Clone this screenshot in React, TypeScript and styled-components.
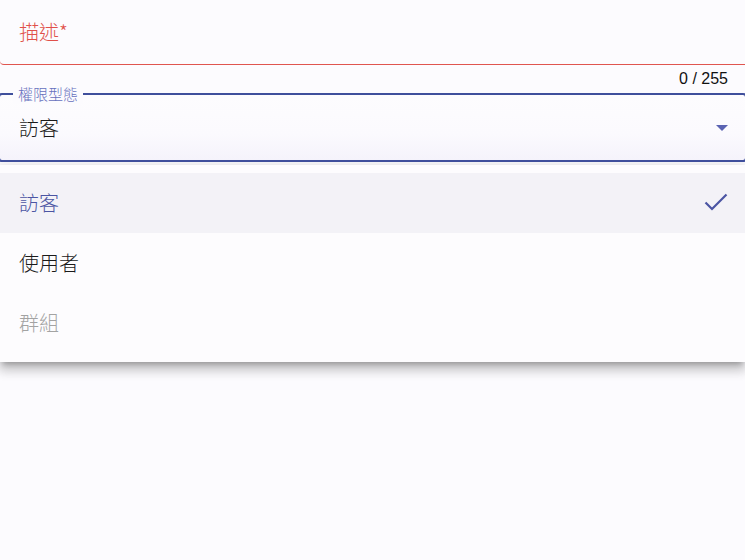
import React from "react";
import styled, { createGlobalStyle } from "styled-components";

const Global = createGlobalStyle`
  html, body { margin: 0; padding: 0; background: #fcfbfe; }
  body { font-family: "Noto Sans CJK TC", "Noto Sans", sans-serif; overflow: hidden; }
`;

const Page = styled.div`
  width: 745px;
  height: 560px;
  background: #fcfbfe;
  overflow: hidden;
`;

const DescField = styled.div`
  height: 65px;
  box-sizing: border-box;
  padding-bottom: 2px;
  border-bottom: 1px solid #e0554f;
  border-bottom-left-radius: 4px;
  display: flex;
  align-items: center;
  padding-left: 19px;
  font-size: 20px;
  font-weight: 300;
  color: #e0504a;
`;

const Counter = styled.div`
  height: 28px;
  display: flex;
  align-items: center;
  justify-content: flex-end;
  padding-right: 17px;
  font-family: "Liberation Sans", Arial, sans-serif;
  font-size: 16px;
  color: #111;
`;

const SelectBox = styled.div`
  position: relative;
  margin: 0 -2px;
  height: 65px;
  border: 2px solid #3f4f9c;
  border-radius: 4px;
  background: linear-gradient(to bottom, #fdfcfe 0%, #fbfafe 60%, #f5f3fb 100%);
  display: flex;
  align-items: center;
  justify-content: space-between;
  padding: 0 17px 0 19px;
`;

const FloatLabel = styled.span`
  position: absolute;
  top: -11px;
  left: 13px;
  padding: 0 5px;
  background: #fcfbfe;
  font-size: 15px;
  font-weight: 300;
  line-height: 20px;
  color: #6670bd;
`;

const Value = styled.span`
  font-size: 20px;
  font-weight: 300;
  color: #1a1a1a;
  padding-bottom: 1px;
`;

const Menu = styled.div`
  margin-top: 3px;
  padding: 8px 0 9px;
  background: #fdfcfe;
  box-shadow: 0 5px 5px -3px rgba(0, 0, 0, 0.22), 0 8px 10px 1px rgba(0, 0, 0, 0.15),
    0 3px 14px 2px rgba(0, 0, 0, 0.12);
`;

const Item = styled.div<{ $selected?: boolean; $disabled?: boolean }>`
  height: 60px;
  box-sizing: border-box;
  padding: 0 17px 2px 19px;
  display: flex;
  align-items: center;
  justify-content: space-between;
  font-size: 20px;
  font-weight: 300;
  background: ${(p) => (p.$selected ? "#f3f2f7" : "transparent")};
  color: ${(p) => (p.$selected ? "#4b55a3" : p.$disabled ? "#a3a3a3" : "#1a1a1a")};
`;

const Arrow = () => (
  <svg width="12" height="6" viewBox="0 0 12 6">
    <path d="M0 0 L12 0 L6 6 Z" fill="#5a63b2" />
  </svg>
);

const Check = () => (
  <svg width="24" height="20" viewBox="0 0 24 20">
    <path d="M1.5 10.5 L8 17 L22.5 2.5" fill="none" stroke="#4b55a3" strokeWidth="2.2" />
  </svg>
);

export default function App() {
  return (
    <Page>
      <Global />
      <DescField>描述*</DescField>
      <Counter>0 / 255</Counter>
      <SelectBox>
        <FloatLabel>權限型態</FloatLabel>
        <Value>訪客</Value>
        <Arrow />
      </SelectBox>
      <Menu>
        <Item $selected>
          訪客
          <Check />
        </Item>
        <Item>使用者</Item>
        <Item $disabled>群組</Item>
      </Menu>
    </Page>
  );
}
